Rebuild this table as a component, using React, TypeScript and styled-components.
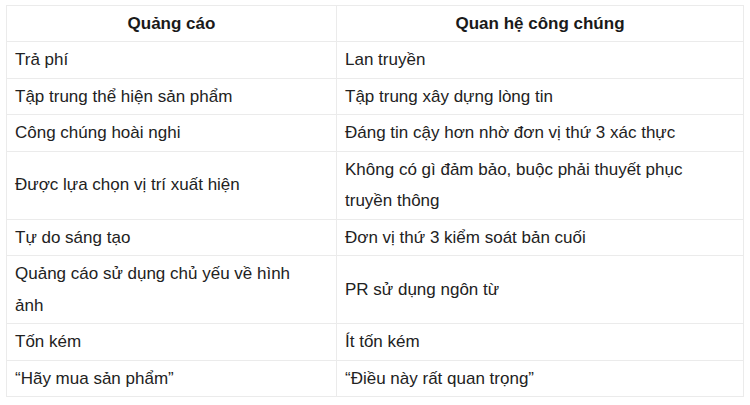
import React from "react";
import styled, { createGlobalStyle } from "styled-components";

const GlobalStyle = createGlobalStyle`
    body {
        margin: 0;
        background-color: #fff;
        font-family: "Liberation Sans", Arial, sans-serif;
    }
`

const Wrapper = styled.div`
    padding: 5px 6px;
`

const Table = styled.table`
    width: 737px;
    border-collapse: collapse;
    table-layout: fixed;
    font-size: 17px;
    color: #222;
`

const HeadCell = styled.th`
    border: 1px solid #ebebeb;
    padding: 0 8px;
    height: 35px;
    line-height: 31px;
    font-weight: bold;
    text-align: center;
    color: #1a1a1a;
`

const Cell = styled.td`
    border: 1px solid #ebebeb;
    padding: 2px 24px 2px 8px;
    line-height: 31.5px;
    vertical-align: middle;
    text-align: left;
`

const rows: [string, string][] = [
    ["Trả phí", "Lan truyền"],
    ["Tập trung thể hiện sản phẩm", "Tập trung xây dựng lòng tin"],
    ["Công chúng hoài nghi", "Đáng tin cậy hơn nhờ đơn vị thứ 3 xác thực"],
    ["Được lựa chọn vị trí xuất hiện", "Không có gì đảm bảo, buộc phải thuyết phục truyền thông"],
    ["Tự do sáng tạo", "Đơn vị thứ 3 kiểm soát bản cuối"],
    ["Quảng cáo sử dụng chủ yếu về hình ảnh", "PR sử dụng ngôn từ"],
    ["Tốn kém", "Ít tốn kém"],
    ["“Hãy mua sản phẩm”", "“Điều này rất quan trọng”"],
]

const App = () => {
    return (
        <Wrapper>
            <GlobalStyle />
            <Table>
                <colgroup>
                    <col style={{ width: "330px" }} />
                    <col style={{ width: "407px" }} />
                </colgroup>
                <thead>
                    <tr>
                        <HeadCell>Quảng cáo</HeadCell>
                        <HeadCell>Quan hệ công chúng</HeadCell>
                    </tr>
                </thead>
                <tbody>
                    {rows.map(([ad, pr], i) => (
                        <tr key={i}>
                            <Cell>{ad}</Cell>
                            <Cell>{pr}</Cell>
                        </tr>
                    ))}
                </tbody>
            </Table>
        </Wrapper>
    )
}

export default App;
